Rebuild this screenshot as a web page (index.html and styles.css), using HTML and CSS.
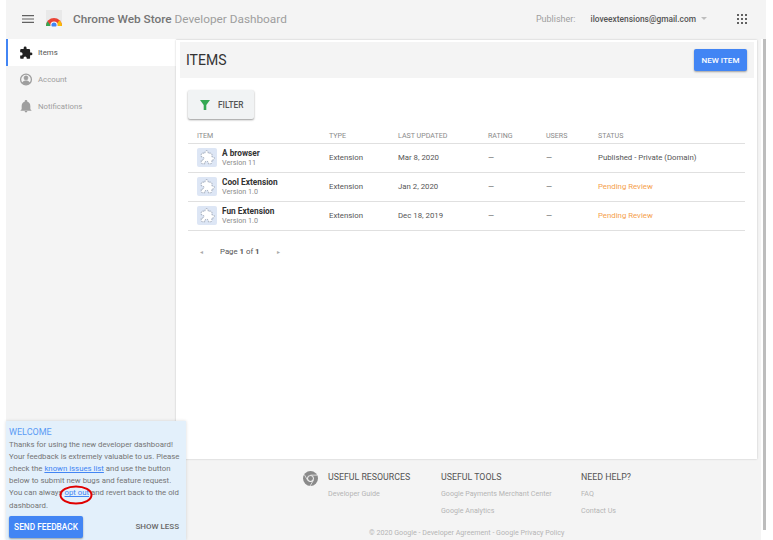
FILE: index.html
```html
<!DOCTYPE html>
<html lang="en">
<head>
  <meta charset="UTF-8" />
  <title>Chrome Web Store Developer Dashboard</title>
  <link rel="stylesheet" href="styles.css">
</head>
<body>
  <div class="page">
    <header class="topbar">
      <svg class="menu-icon" width="12" height="8" viewBox="0 0 12 8"><path d="M0 .7h12M0 4h12M0 7.300h12" stroke="#616161" stroke-width="1.200"/></svg>
      <svg class="store-logo" width="18" height="17" viewBox="0 0 18 17">
        <path d="M1 0h16v16H1z" fill="#e9e9e9"/>
        <path d="M1 16a8 8 0 0 1 16 0z" fill="#ea4335"/>
        <path d="M1 16a8 8 0 0 1 1.500-4.700L6 16z" fill="#34a853"/>
        <path d="M17 16a8 8 0 0 0-2.500-5.800L12 13.500l.5 2.500z" fill="#fbbc05"/>
        <circle cx="9" cy="15" r="3.600" fill="#fff"/>
        <circle cx="9" cy="15" r="2.600" fill="#4285f4"/>
        <path d="M0 16.500h18V17H0z" fill="#f4f4f4"/>
      </svg>
      <div class="brand"><b>Chrome Web Store</b> Developer Dashboard</div>
      <div class="publisher-label">Publisher:</div>
      <div class="publisher-email">iloveextensions@gmail.com</div>
      <span class="caret"></span>
      <svg class="apps-icon" width="10" height="10" viewBox="0 0 10 10" fill="#616161">
        <path d="M0 0h2v2H0zM4 0h2v2H4zM8 0h2v2H8zM0 4h2v2H0zM4 4h2v2H4zM8 4h2v2H8zM0 8h2v2H0zM4 8h2v2H4zM8 8h2v2H8z"/>
      </svg>
    </header>

    <div class="content">
      <nav class="sidebar">
        <a class="nav-item active">
          <svg width="14" height="14" viewBox="0 0 24 24" fill="#212121"><path d="M20.500 11H19V7a2 2 0 0 0-2-2h-4V3.500a2.500 2.500 0 0 0-5 0V5H4a2 2 0 0 0-2 2v3.800h1.500a2.700 2.700 0 0 1 0 5.400H2V20a2 2 0 0 0 2 2h3.800v-1.500a2.700 2.700 0 0 1 5.400 0V22H17a2 2 0 0 0 2-2v-4h1.500a2.500 2.500 0 0 0 0-5z"/></svg>
          <span>Items</span>
        </a>
        <a class="nav-item">
          <svg width="14" height="13" viewBox="0 0 24 24" fill="none" stroke="#9e9e9e"><circle cx="12" cy="12" r="10" stroke-width="2.400"/><circle cx="12" cy="9" r="3.800" fill="#9e9e9e"/><path d="M5 18c1.500-2.600 4.300-3.500 7-3.500s5.500.9 7 3.500c-1.800 2-4.300 3-7 3s-5.200-1-7-3z" fill="#9e9e9e"/></svg>
          <span>Account</span>
        </a>
        <a class="nav-item">
          <svg width="14" height="13" viewBox="0 0 24 24" fill="#9e9e9e"><path d="M12 23a2.500 2.500 0 0 0 2.500-2.500h-5A2.500 2.500 0 0 0 12 23zm8-6v-6c0-3.800-2-6.800-5.500-7.600V2.500a2.500 2.500 0 0 0-5 0v.9C6 4.200 4 7.200 4 11v6l-2 2v1h20v-1z"/></svg>
          <span>Notifications</span>
        </a>
      </nav>

      <main class="card">
        <div class="card-title">
          <h1>ITEMS</h1>
          <button class="new-item">NEW ITEM</button>
        </div>
        <button class="filter">
          <svg width="10" height="10" viewBox="0 0 10 10"><path d="M0 0h10L6.300 5v5H3.700V5z" fill="#34a853"/></svg>
          FILTER
        </button>
        <table class="items">
          <thead>
            <tr><th class="col-item">ITEM</th><th class="col-type">TYPE</th><th class="col-date">LAST UPDATED</th><th class="col-rating">RATING</th><th class="col-users">USERS</th><th>STATUS</th></tr>
          </thead>
          <tbody>
            <tr>
              <td><div class="item-cell"><div class="thumb"><svg width="15" height="15" viewBox="0 0 24 24" fill="#fff" stroke="#8a94a6" stroke-width="1.200" stroke-dasharray="2.500 1.500"><path d="M20.500 11H19V7a2 2 0 0 0-2-2h-4V3.500a2.500 2.500 0 0 0-5 0V5H4a2 2 0 0 0-2 2v3.800h1.500a2.700 2.700 0 0 1 0 5.400H2V20a2 2 0 0 0 2 2h3.800v-1.500a2.700 2.700 0 0 1 5.400 0V22H17a2 2 0 0 0 2-2v-4h1.500a2.500 2.500 0 0 0 0-5z"/></svg></div><div><div class="item-name">A browser</div><div class="item-version">Version 11</div></div></div></td>
              <td>Extension</td><td>Mar 8, 2020</td><td>—</td><td>—</td><td>Published - Private (Domain)</td>
            </tr>
            <tr>
              <td><div class="item-cell"><div class="thumb"><svg width="15" height="15" viewBox="0 0 24 24" fill="#fff" stroke="#8a94a6" stroke-width="1.200" stroke-dasharray="2.500 1.500"><path d="M20.500 11H19V7a2 2 0 0 0-2-2h-4V3.500a2.500 2.500 0 0 0-5 0V5H4a2 2 0 0 0-2 2v3.800h1.500a2.700 2.700 0 0 1 0 5.400H2V20a2 2 0 0 0 2 2h3.800v-1.500a2.700 2.700 0 0 1 5.400 0V22H17a2 2 0 0 0 2-2v-4h1.500a2.500 2.500 0 0 0 0-5z"/></svg></div><div><div class="item-name">Cool Extension</div><div class="item-version">Version 1.0</div></div></div></td>
              <td>Extension</td><td>Jan 2, 2020</td><td>—</td><td>—</td><td class="pending">Pending Review</td>
            </tr>
            <tr>
              <td><div class="item-cell"><div class="thumb"><svg width="15" height="15" viewBox="0 0 24 24" fill="#fff" stroke="#8a94a6" stroke-width="1.200" stroke-dasharray="2.500 1.500"><path d="M20.500 11H19V7a2 2 0 0 0-2-2h-4V3.500a2.500 2.500 0 0 0-5 0V5H4a2 2 0 0 0-2 2v3.800h1.500a2.700 2.700 0 0 1 0 5.400H2V20a2 2 0 0 0 2 2h3.800v-1.500a2.700 2.700 0 0 1 5.400 0V22H17a2 2 0 0 0 2-2v-4h1.500a2.500 2.500 0 0 0 0-5z"/></svg></div><div><div class="item-name">Fun Extension</div><div class="item-version">Version 1.0</div></div></div></td>
              <td>Extension</td><td>Dec 18, 2019</td><td>—</td><td>—</td><td class="pending">Pending Review</td>
            </tr>
          </tbody>
        </table>
        <div class="pager">
          <span class="arrow">◂</span>
          <span>Page <b>1</b> of <b>1</b></span>
          <span class="arrow">▸</span>
        </div>
      </main>
    </div>

    <footer class="footer">
      <div class="footer-cols">
        <svg class="chrome-mark" width="15" height="15" viewBox="0 0 16 16"><circle cx="8" cy="8" r="8" fill="#8a8a8a"/><circle cx="8" cy="8" r="3.600" fill="#f4f4f4"/><circle cx="8" cy="8" r="2.600" fill="#8a8a8a"/><path d="M8 4.400h7M5 10L1.500 4M11 10l-3.500 6" stroke="#f4f4f4" stroke-width=".8"/></svg>
        <div class="footer-col col-res"><h4>USEFUL RESOURCES</h4><a>Developer Guide</a></div>
        <div class="footer-col col-tools"><h4>USEFUL TOOLS</h4><a>Google Payments Merchant Center</a><a>Google Analytics</a></div>
        <div class="footer-col"><h4>NEED HELP?</h4><a>FAQ</a><a>Contact Us</a></div>
      </div>
      <div class="copyright">© 2020 Google - Developer Agreement - Google Privacy Policy</div>
    </footer>

    <aside class="welcome">
      <div class="welcome-title">WELCOME</div>
      <p>Thanks for using the new developer dashboard! Your feedback is extremely valuable to us. Please check the <a>known issues list</a> and use the button below to submit new bugs and feature request. You can always <a>opt out</a> and revert back to the old dashboard.</p>
      <div class="welcome-actions">
        <button class="send-feedback">SEND FEEDBACK</button>
        <button class="show-less">SHOW LESS</button>
      </div>
      <svg class="red-circle" width="34" height="20" viewBox="0 0 34 20"><ellipse cx="17" cy="10" rx="15.500" ry="8.500" fill="none" stroke="#e00000" stroke-width="2"/></svg>
    </aside>

    <div class="scroll-track"><div class="scroll-thumb"></div></div>
  </div>
</body>
</html>
```

FILE: styles.css
```css
* {
  box-sizing: border-box;
}

html, body {
  margin: 0;
  height: 540px;
  overflow: hidden;
  background-color: #fff;
}

body {
  font-family: Roboto, Arial, sans-serif;
  color: #424242;
}

.page {
  position: relative;
  margin-left: 6px;
  width: 760px;
  height: 540px;
  background-color: #f4f4f4;
}

.topbar {
  display: flex;
  align-items: center;
  height: 39px;
  padding-left: 16px;
  padding-bottom: 2px;
}

.store-logo {
  margin-left: 11px;
}

.brand {
  margin-left: 10px;
  font-size: 11.800px;
  color: #9e9e9e;
  white-space: nowrap;
}

.brand b {
  font-weight: 500;
  color: #757575;
}

.publisher-label {
  margin-left: auto;
  font-size: 9px;
  color: #9e9e9e;
}

.publisher-email {
  margin-left: 15px;
  font-size: 8.400px;
  font-weight: 500;
  color: #555;
}

.caret {
  margin-left: 5px;
  border-left: 3.500px solid transparent;
  border-right: 3.500px solid transparent;
  border-top: 3px solid #bdbdbd;
}

.apps-icon {
  margin-left: 30px;
  margin-right: 19px;
}

.content {
  display: flex;
  height: 420px;
}

.sidebar {
  width: 170px;
  flex-shrink: 0;
}

.nav-item {
  display: flex;
  align-items: center;
  gap: 5px;
  height: 27px;
  padding-left: 13px;
  font-size: 7.800px;
  color: #9e9e9e;
}

.nav-item.active {
  background-color: #fff;
  border-left: 2px solid #4285f4;
  padding-left: 11px;
  color: #555;
}

.card {
  width: 581px;
  margin-top: 1px;
  padding: 2px 3px 0 4px;
  background-color: #fff;
  box-shadow: 0 0 2px rgba(0,0,0,0.2);
}

.card-title {
  display: flex;
  align-items: center;
  justify-content: space-between;
  height: 36px;
  padding: 0 7px 0 6px;
  background-color: #f4f4f4;
}

h1 {
  margin: 0;
  font-size: 14px;
  font-weight: 400;
  color: #333;
}

.new-item {
  width: 53px;
  height: 22px;
  padding: 0;
  background-color: #4285f4;
  border: none;
  border-radius: 2px;
  font: 500 8px Roboto, Arial, sans-serif;
  color: #fff;
  box-shadow: 0 1px 2px rgba(0,0,0,0.35);
}

.filter {
  display: flex;
  align-items: center;
  gap: 8px;
  width: 66px;
  height: 29px;
  margin: 12px 0 0 8px;
  padding: 0 0 0 12px;
  background-color: #f1f3f4;
  border: none;
  border-radius: 2px;
  font: 500 8.300px Roboto, Arial, sans-serif;
  color: #555;
  box-shadow: 0 1px 2px rgba(0,0,0,0.4);
}

.items {
  width: 557px;
  margin: 9px 0 0 8px;
  border-collapse: collapse;
  table-layout: fixed;
  font-size: 7.800px;
}

.items th {
  height: 15px;
  padding: 0 0 0 9px;
  font-weight: 400;
  font-size: 7.100px;
  text-align: left;
  color: #8a8a8a;
  border-bottom: 1px solid #e0e0e0;
}

.items td {
  height: 29px;
  padding: 0 0 0 9px;
  color: #555;
  border-bottom: 1px solid #e0e0e0;
}

.col-item { width: 132px; }
.col-type { width: 69px; }
.col-date { width: 90px; }
.col-rating { width: 58px; }
.col-users { width: 52px; }

.item-cell {
  display: flex;
  align-items: center;
  gap: 5px;
}

.thumb {
  display: flex;
  align-items: center;
  justify-content: center;
  width: 20px;
  height: 19px;
  background-color: #dde6f5;
  border-radius: 2px;
}

.item-name {
  font-size: 8.300px;
  font-weight: 700;
  line-height: 10px;
  color: #333;
}

.item-version {
  font-size: 7.200px;
  line-height: 10px;
  color: #8a8a8a;
}

.items td.pending {
  color: #f5a04c;
}

.pager {
  display: flex;
  align-items: center;
  gap: 17px;
  margin: 16px 0 0 20px;
  font-size: 7.800px;
  color: #555;
}

.pager .arrow {
  font-size: 6px;
  color: #aaa;
}

.footer {
  height: 81px;
  padding-top: 13px;
}

.footer-cols {
  display: flex;
  height: 56px;
  padding-left: 297px;
}

.chrome-mark {
  margin-top: -1px;
  margin-right: 10px;
}

.footer-col h4 {
  margin: 0 0 6px;
  font-size: 8.800px;
  line-height: 11px;
  font-weight: 400;
  color: #555;
}

.footer-col a {
  display: block;
  height: 17px;
  line-height: 10px;
  font-size: 7.150px;
  color: #b5b5b5;
}

.col-res { width: 113px; }
.col-tools { width: 140px; }

.copyright {
  padding-left: 363px;
  font-size: 7.150px;
  color: #b5b5b5;
}

.welcome {
  position: absolute;
  left: 0;
  top: 421px;
  width: 180px;
  height: 119px;
  padding: 5px 3px 0;
  background-color: #e3f0fb;
  box-shadow: 0 0 3px rgba(0,0,0,0.15);
  font-size: 7.800px;
  line-height: 12.100px;
  color: #757575;
}

.welcome-title {
  font-size: 9px;
  color: #5c9cf5;
}

.welcome p {
  margin: 1px 0 0;
}

.welcome a {
  color: #4285f4;
  text-decoration: underline;
}

.welcome-actions {
  display: flex;
  align-items: center;
  justify-content: space-between;
  margin-top: 4px;
}

.send-feedback {
  width: 74px;
  height: 22px;
  padding: 0;
  background-color: #4285f4;
  border: none;
  border-radius: 2px;
  font: 500 8.300px Roboto, Arial, sans-serif;
  color: #fff;
  box-shadow: 0 1px 2px rgba(0,0,0,0.35);
}

.show-less {
  margin-right: 4px;
  padding: 0;
  background: none;
  border: none;
  font: 500 8px Roboto, Arial, sans-serif;
  color: #666;
}

.red-circle {
  position: absolute;
  left: 53px;
  top: 64px;
}

.scroll-track {
  position: absolute;
  left: 755px;
  top: 39px;
  width: 5px;
  height: 501px;
  padding-left: 2px;
  background-color: #fff;
}

.scroll-thumb {
  width: 3px;
  height: 491px;
  background-color: #bdbdbd;
}
```
